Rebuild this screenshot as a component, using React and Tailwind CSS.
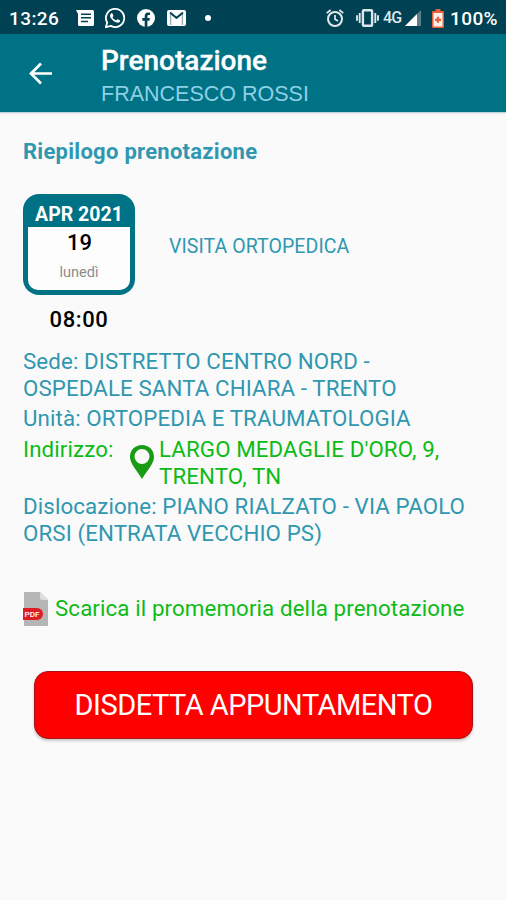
import React from "react";

const StatusBar = () => (
  <div className="flex h-[34px] items-center bg-[#004153] pl-[9px] pt-[2px] text-white">
    <span className="w-[67px] text-[19px] font-medium leading-none tracking-[0.4px]">
      13:26
    </span>

    <svg className="h-4 w-[18px]" viewBox="0 0 18 16">
      <path d="M0 0h16.500a1.500 1.500 0 0 1 1.500 1.500v13a1.500 1.500 0 0 1-1.500 1.500h-13A1.500 1.500 0 0 1 2 14.500V4z" fill="#fff" />
      <path d="M5 4.200h10M5 7.800h10M5 11.400h7" stroke="#004153" strokeWidth="1.500" />
    </svg>

    <svg className="ml-[11px] h-5 w-5" viewBox="0 0 24 24" fill="#fff">
      <path d="M17.472 14.382c-.297-.149-1.758-.867-2.030-.967-.273-.099-.471-.148-.670.150-.197.297-.767.966-.940 1.164-.173.199-.347.223-.644.075-.297-.150-1.255-.463-2.390-1.475-.883-.788-1.480-1.761-1.653-2.059-.173-.297-.018-.458.130-.606.134-.133.298-.347.446-.520.149-.174.198-.298.298-.497.099-.198.050-.371-.025-.520-.075-.149-.669-1.612-.916-2.207-.242-.579-.487-.500-.669-.510l-.570-.010c-.198 0-.520.074-.792.372-.272.297-1.040 1.016-1.040 2.479 0 1.462 1.065 2.875 1.213 3.074.149.198 2.096 3.200 5.077 4.487.709.306 1.262.489 1.694.625.712.227 1.360.195 1.871.118.571-.085 1.758-.719 2.006-1.413.248-.694.248-1.289.173-1.413-.074-.124-.272-.198-.570-.347z" />
      <path d="M12.050 1.100A10.900 10.900 0 0 0 2.600 17.450L1.050 23l5.800-1.500A10.900 10.900 0 1 0 12.050 1.100z" fill="none" stroke="#fff" strokeWidth="2.200" />
    </svg>

    <svg className="ml-3 h-[18px] w-[18px]" viewBox="0 0 18 18">
      <circle cx="9" cy="9" r="9" fill="#fff" />
      <path d="M7.700 18v-6.300H5.300V9h2.400V7.200c0-2.400 1.300-3.600 3.400-3.600.8 0 1.500.1 1.900.2v2.100h-1.300c-1 0-1.300.6-1.300 1.400V9h2.500l-.5 2.700h-2V18z" fill="#004153" />
    </svg>

    <svg className="ml-3 h-4 w-[19px]" viewBox="0 0 19 16">
      <rect width="19" height="16" rx="2" fill="#fff" />
      <path d="M3.600 15V3.600l5.900 4.700 5.900-4.700V15" fill="none" stroke="#9bb0b7" strokeWidth="1.400" />
      <path d="M3 2.500l6.500 5.300L16 2.500" fill="none" stroke="#004153" strokeWidth="1.800" />
    </svg>

    <span className="ml-[19px] h-[6px] w-[6px] rounded-full bg-white" />

    <svg className="ml-[115px] h-[18px] w-[18px]" viewBox="0 0 18 18" fill="none" stroke="#e2ebee" strokeWidth="2">
      <circle cx="9" cy="10" r="7" />
      <path d="M9 6v4.300l3 1.800M.7 4.200L4.600 1M17.300 4.200L13.400 1" strokeWidth="1.700" />
    </svg>

    <svg className="ml-[12px] h-[18px] w-[23px]" viewBox="0 0 23 18" fill="none" stroke="#dce7ea" strokeWidth="1.900">
      <rect x="6.900" y="1.300" width="9.200" height="15.400" rx="1" strokeWidth="2.400" />
      <path d="M3.700 4v10M1 6.200v5.600M19.300 4v10M22 6.200v5.600" />
    </svg>

    <span className="ml-[4px] w-[19px] text-[16px] font-medium leading-none tracking-[-0.8px] text-[#dce7ea]">
      4G
    </span>

    <svg className="ml-[3px] h-4 w-4" viewBox="0 0 16 16">
      <path d="M0 16L16 0v16z" fill="#587f8b" />
      <path d="M0 16L12 4v12z" fill="#fff" />
    </svg>

    <svg className="ml-[11px] h-[19px] w-3" viewBox="0 0 12 19">
      <path d="M3.500 0h5v2H11a1 1 0 0 1 1 1v15a1 1 0 0 1-1 1H1a1 1 0 0 1-1-1V3a1 1 0 0 1 1-1h2.500z" fill="#e8603f" />
      <path d="M1.500 4h9v13.500h-9z" fill="#fff0e8" />
      <path d="M6 7.800v6M3 10.800h6" stroke="#e8603f" strokeWidth="2.200" />
    </svg>

    <span className="ml-[6px] text-[19px] font-medium leading-none tracking-[0.4px]">
      100%
    </span>
  </div>
);

const Header = () => (
  <header className="flex h-[79px] border-b border-[#b9d4da] bg-[#007286] text-white shadow-[0_1px_2px_rgba(0,0,0,0.08)]">
    <div className="w-[101px] pl-[29px] pt-[28px]">
      <svg className="h-[23px] w-[23px]" viewBox="0 0 23 23" fill="none" stroke="#fff" strokeWidth="2.700">
        <path d="M23 11.500H1.700M12 1.500l-10 10 10 10" />
      </svg>
    </div>
    <div className="whitespace-nowrap">
      <h1 className="mt-[11px] text-[28px] font-medium leading-8 [-webkit-text-stroke:0.3px_white]">
        Prenotazione
      </h1>
      <p className="mt-[5px] font-['Liberation_Sans',sans-serif] text-[21.5px] leading-6 text-[#8dd0e4]">
        FRANCESCO ROSSI
      </p>
    </div>
  </header>
);

const DateCard = () => (
  <div className="w-28">
    <div className="h-[101px] rounded-[16px] bg-[#007286] px-[5px] pb-[5px] text-center">
      <div className="h-[33px] whitespace-nowrap pt-[10px] text-[19.5px] font-bold leading-[22px] text-white">
        APR 2021
      </div>
      <div className="h-[63px] rounded-b-[10px] bg-[#fdfdfd] pt-[4px]">
        <p className="pl-[1px] text-[22px] font-medium leading-6 text-black">19</p>
        <p className="mt-[10px] text-[14.5px] leading-4 text-[#8c8c8c]">lunedì</p>
      </div>
    </div>
    <p className="mt-[12px] text-center text-[22px] font-medium leading-[26px] tracking-[0.6px] text-black">
      08:00
    </p>
  </div>
);

const PdfIcon = () => (
  <svg className="h-[34px] w-[26px]" viewBox="0 0 26 34">
    <path d="M1 0h16l8 8v26H1z" fill="#b5b5b5" />
    <path d="M17 0l8 8h-6a2 2 0 0 1-2-2z" fill="#dedede" />
    <path d="M0 16h14a6 6 0 0 1 0 12H0z" fill="#dc1f24" />
    <text x="1.500" y="24.700" fontSize="7.500" fontWeight="500" textLength="15" lengthAdjust="spacingAndGlyphs" fill="#fff" fontFamily="Roboto, sans-serif">
      PDF
    </text>
  </svg>
);

const App = () => {
  return (
    <div className="min-h-screen w-[506px] bg-[#fafafa] font-[Roboto,sans-serif]">
      <StatusBar />
      <Header />

      <main className="pl-[23px] pt-[26px] text-[#3097b0]">
        <h2 className="text-[22px] font-bold leading-[26px] tracking-[0.27px]">
          Riepilogo prenotazione
        </h2>

        <div className="mt-[29px] flex">
          <DateCard />
          <p className="ml-[34px] mt-[41px] text-[19.5px] leading-6 tracking-[0.07px]">
            VISITA ORTOPEDICA
          </p>
        </div>

        <div className="mt-[15px] flex flex-col gap-[4px] whitespace-nowrap text-[22.3px] leading-[26.6px] tracking-[0.11px]">
          <p>
            Sede: DISTRETTO CENTRO NORD -<br />
            OSPEDALE SANTA CHIARA - TRENTO
          </p>
          <p>Unità: ORTOPEDIA E TRAUMATOLOGIA</p>
          <div className="flex h-[53.2px] text-[#0dbb16]">
            <p className="w-[107px]">Indirizzo:</p>
            <svg className="mt-[9px] h-[34px] w-6" viewBox="0 0 24 34">
              <path d="M12 0C5.200 0 0 5 0 11.800 0 19 6 24 12 34c6-10 12-15 12-22.200C24 5 18.800 0 12 0zm0 4a7.500 7.500 0 1 1 0 15 7.500 7.500 0 0 1 0-15z" fill="#179c13" />
            </svg>
            <p className="ml-[5px] leading-[27px]">
              LARGO MEDAGLIE D'ORO, 9,<br />
              TRENTO, TN
            </p>
          </div>
          <p>
            Dislocazione: PIANO RIALZATO - VIA PAOLO<br />
            ORSI (ENTRATA VECCHIO PS)
          </p>
        </div>

        <a className="mt-[46px] flex text-[#0dbb16]">
          <PdfIcon />
          <span className="ml-[6px] mt-[3px] whitespace-nowrap text-[22.3px] leading-[26px] tracking-[0.11px]">
            Scarica il promemoria della prenotazione
          </span>
        </a>

        <button className="ml-[11px] mt-[45px] block h-[68px] w-[439px] whitespace-nowrap rounded-[14px] border border-[#a51218] bg-[#ff0000] pt-[2px] text-[29px] tracking-[-0.5px] text-white shadow-[0_2px_3px_rgba(0,0,0,0.2)]">
          DISDETTA APPUNTAMENTO
        </button>
      </main>
    </div>
  );
};

export default App;
